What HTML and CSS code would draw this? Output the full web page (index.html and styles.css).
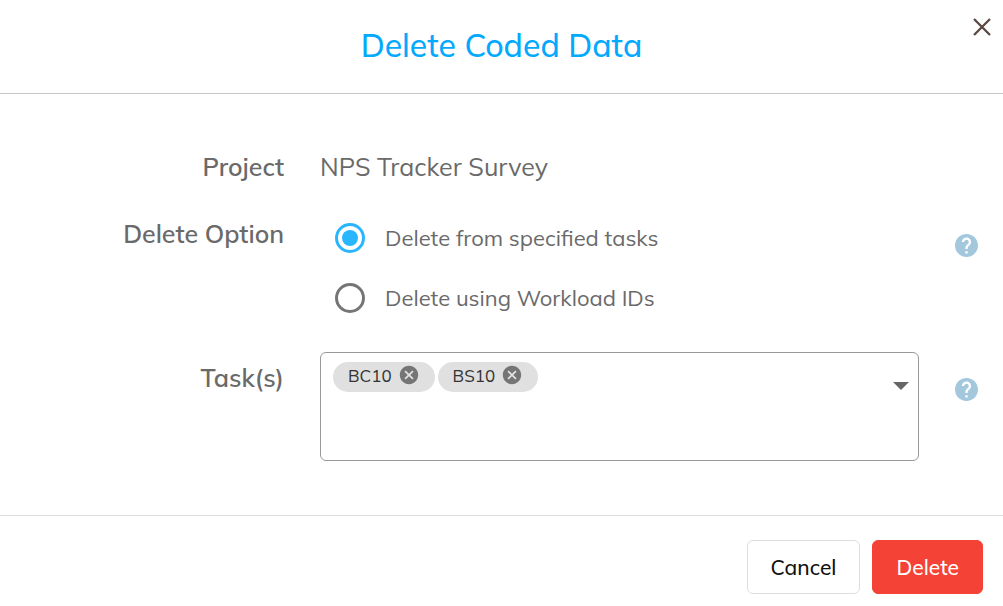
FILE: index.html
```html
<!DOCTYPE html>
<html lang="en">
    <head>
        <meta charset="UTF-8">
        <meta name="viewport" content="width=device-width, initial-scale=1.0">
        <title>Delete Coded Data</title>
        <link rel="stylesheet" href="styles.css">
    </head>
    <body>
        <form class="dialog">
            <header class="dialog-header">
                <h1 class="dialog-title">Delete Coded Data</h1>
                <button type="button" class="close" aria-label="Close">
                    <svg width="18" height="18" viewBox="0 0 18 18"><path d="M1 1l16 16M17 1L1 17" fill="none" stroke="#5a483f" stroke-width="2.3"/></svg>
                </button>
            </header>

            <main class="dialog-body">
                <div class="row">
                    <span class="label">Project</span>
                    <span class="value">NPS Tracker Survey</span>
                </div>

                <div class="row" role="radiogroup" aria-labelledby="option-label">
                    <span class="label label-field" id="option-label">Delete Option</span>
                    <div class="options">
                        <label class="option"><input type="radio" name="option" class="radio" checked>Delete from specified tasks</label>
                        <label class="option"><input type="radio" name="option" class="radio">Delete using Workload IDs</label>
                    </div>
                    <button type="button" class="help" aria-label="Help with delete option">
                        <svg width="23" height="23" viewBox="2 2 20 20"><path d="M12 2C6.480 2 2 6.480 2 12s4.480 10 10 10 10-4.480 10-10S17.520 2 12 2zm1 17h-2v-2h2v2zm2.070-7.750l-.9.920C13.450 12.900 13 13.500 13 15h-2v-.5c0-1.100.450-2.100 1.170-2.830l1.240-1.260c.370-.360.590-.860.590-1.410 0-1.100-.9-2-2-2s-2 .9-2 2H8c0-2.210 1.790-4 4-4s4 1.790 4 4c0 .880-.360 1.680-.930 2.250z" fill="#a3c8de"/></svg>
                    </button>
                </div>

                <div class="row">
                    <label class="label label-field" for="tasks">Task(s)</label>
                    <div class="tasks">
                        <span class="chip">BC10
                            <button type="button" class="chip-remove" aria-label="Remove BC10">
                                <svg width="22" height="22" viewBox="0 0 24 24"><path d="M12 2C6.470 2 2 6.470 2 12s4.470 10 10 10 10-4.470 10-10S17.530 2 12 2zm5 13.590L15.590 17 12 13.410 8.410 17 7 15.590 10.590 12 7 8.410 8.410 7 12 10.590 15.590 7 17 8.410 13.410 12 17 15.590z" fill="#757575"/></svg>
                            </button>
                        </span>
                        <span class="chip">BS10
                            <button type="button" class="chip-remove" aria-label="Remove BS10">
                                <svg width="22" height="22" viewBox="0 0 24 24"><path d="M12 2C6.470 2 2 6.470 2 12s4.470 10 10 10 10-4.470 10-10S17.530 2 12 2zm5 13.590L15.590 17 12 13.410 8.410 17 7 15.590 10.590 12 7 8.410 8.410 7 12 10.590 15.590 7 17 8.410 13.410 12 17 15.590z" fill="#757575"/></svg>
                            </button>
                        </span>
                        <select class="tasks-select" id="tasks">
                            <option value=""></option>
                        </select>
                        <svg class="arrow" width="16" height="8" viewBox="0 0 16 8"><path d="M0 0h16L8 8z" fill="#666"/></svg>
                    </div>
                    <button type="button" class="help" aria-label="Help with tasks">
                        <svg width="23" height="23" viewBox="2 2 20 20"><path d="M12 2C6.480 2 2 6.480 2 12s4.480 10 10 10 10-4.480 10-10S17.520 2 12 2zm1 17h-2v-2h2v2zm2.070-7.750l-.9.920C13.450 12.900 13 13.500 13 15h-2v-.5c0-1.100.450-2.100 1.170-2.830l1.240-1.260c.370-.360.590-.860.590-1.410 0-1.100-.9-2-2-2s-2 .9-2 2H8c0-2.210 1.790-4 4-4s4 1.790 4 4c0 .880-.360 1.680-.930 2.250z" fill="#a3c8de"/></svg>
                    </button>
                </div>
            </main>

            <footer class="dialog-footer">
                <button type="button" class="btn">Cancel</button>
                <button type="submit" class="btn btn-delete">Delete</button>
            </footer>
        </form>
    </body>
</html>
```

FILE: styles.css
```css
* {
    box-sizing: border-box;
}

body {
    margin: 0;
    font-family: Mulish, Muli, "Noto Sans", sans-serif;
    color: #6a6a6a;
    background-color: #fff;
}

button {
    margin: 0;
    padding: 0;
    border: 0;
    background: none;
    font-family: inherit;
    cursor: pointer;
}

svg {
    display: block;
}

.dialog-header {
    position: relative;
    padding: 25px 48px 28px;
    border-bottom: 1px solid #c8c8c8;
}

.dialog-title {
    margin: 0;
    font-size: 32px;
    line-height: 40px;
    font-weight: 500;
    text-align: center;
    color: #03a9fc;
}

.close {
    position: absolute;
    top: 18px;
    right: 12px;
}

.dialog-body {
    display: flex;
    flex-direction: column;
    gap: 24px;
    padding: 56px 25px 54px 0;
}

.row {
    display: grid;
    grid-template-columns: 284px 1fr 23px;
    column-gap: 36px;
    align-items: start;
}

.label,
.value {
    font-size: 25px;
    line-height: 34px;
}

.label {
    font-weight: 600;
    text-align: right;
}

.label-field {
    padding-top: 9px;
}

.options {
    padding-left: 15px;
}

.option {
    display: flex;
    align-items: center;
    gap: 20px;
    height: 60px;
    font-size: 22px;
}

.radio {
    appearance: none;
    display: grid;
    place-items: center;
    width: 30px;
    height: 30px;
    margin: 0;
    border: 3px solid #757575;
    border-radius: 50%;
}

.radio:checked {
    border-color: #29b6ff;
}

.radio:checked::before {
    content: "";
    width: 16px;
    height: 16px;
    border-radius: 50%;
    background-color: #29b6ff;
}

.help {
    margin-top: 26px;
}

.tasks {
    position: relative;
    display: flex;
    align-items: flex-start;
    gap: 3px;
    min-height: 109px;
    padding: 9px 12px;
    border: 1px solid #999;
    border-radius: 6px;
}

.chip {
    display: flex;
    align-items: center;
    gap: 6px;
    height: 30px;
    padding: 0 15px 4px;
    border-radius: 15px;
    font-size: 17px;
    color: #333;
    background-color: #e0e0e0;
}

.tasks-select {
    appearance: none;
    flex: 1;
    height: 48px;
    border: 0;
    background: none;
    font: inherit;
    color: inherit;
}

.arrow {
    position: absolute;
    top: 29px;
    right: 9px;
    pointer-events: none;
}

.dialog-footer {
    display: flex;
    justify-content: flex-end;
    gap: 12px;
    padding: 24px 20px 12px;
    border-top: 1px solid #ddd;
}

.btn {
    height: 54px;
    padding: 0 23px;
    border: 1px solid #ddd;
    border-radius: 6px;
    font-size: 21px;
    font-weight: 500;
    color: #111;
}

.btn-delete {
    border-color: #f44336;
    color: #fff;
    background-color: #f44336;
}
```
